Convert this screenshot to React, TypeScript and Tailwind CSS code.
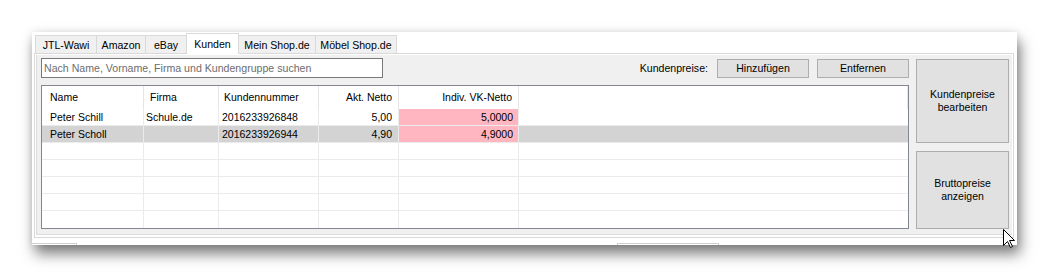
import React from 'react';

type Row = {
  name: string;
  firma: string;
  nr: string;
  netto: string;
  indiv: string;
  selected?: boolean;
};

const rows: Row[] = [
  { name: 'Peter Schill', firma: 'Schule.de', nr: '2016233926848', netto: '5,00', indiv: '5,0000' },
  { name: 'Peter Scholl', firma: '', nr: '2016233926944', netto: '4,90', indiv: '4,9000', selected: true },
];

const tabs = [
  { label: 'JTL-Wawi', w: 'w-[62px]' },
  { label: 'Amazon', w: 'w-[50px] -ml-px' },
  { label: 'eBay', w: 'w-[42px] -ml-px' },
  { label: 'Kunden', w: 'w-[53px] -ml-px', active: true },
  { label: 'Mein Shop.de', w: 'w-[78px] -ml-px' },
  { label: 'Möbel Shop.de', w: 'w-[82px] -ml-px' },
];

const App: React.FC = () => {
  return (
    <div className="relative w-[1051px] h-[278px] overflow-hidden bg-white pl-[32px] pt-[32px] font-['Liberation_Sans',Arial,sans-serif] text-black">
      {/* Fenster */}
      <div className="w-[985px] h-[213px] bg-white flex flex-col shadow-[3px_9px_13px_rgba(0,0,0,0.5),0_0_8px_rgba(0,0,0,0.1)]">
        {/* Reiter */}
        <div className="flex items-end h-[21px] pl-[3px] text-[10.6px] leading-none">
          {tabs.map((t) =>
            t.active ? (
              <div
                key={t.label}
                className={`${t.w} h-[21px] -mb-px relative z-[1] bg-white border-t border-x border-[#d9d9d9] flex items-start justify-center pt-[5px]`}
              >
                {t.label}
              </div>
            ) : (
              <div
                key={t.label}
                className={`${t.w} h-[18px] bg-[#f0f0f0] border-t border-x border-[#d9d9d9] flex items-center justify-center pt-px`}
              >
                {t.label}
              </div>
            )
          )}
        </div>

        {/* Registerkarte */}
        <div className="ml-[2px] w-[980px] h-[185px] border border-[#d9d9d9] bg-white pt-px pl-px pb-[2px] pr-px">
          <div className="h-full flex gap-[7px] bg-[#f0f0f0] border-l border-b border-[#dcdcdc] pl-[4px] pt-[3px]">
            {/* linke Spalte */}
            <div className="w-[868px] flex flex-col">
              <div className="h-[20px] flex items-end text-[10.6px] leading-none">
                <div className="w-[342px] h-[20px] border border-[#7a7a7a] bg-white flex items-center pl-[2px] text-[#6d6d6d]">
                  Nach Name, Vorname, Firma und Kundengruppe suchen
                </div>
                <div className="ml-auto flex items-end">
                  <span className="mr-[9px] mb-[4px]">Kundenpreise:</span>
                  <button className="w-[92px] h-[19px] bg-[#e1e1e1] border border-[#adadad] flex items-center justify-center">
                    Hinzufügen
                  </button>
                  <button className="ml-[8px] w-[92px] h-[19px] bg-[#e1e1e1] border border-[#adadad] flex items-center justify-center">
                    Entfernen
                  </button>
                </div>
              </div>

              {/* Tabelle */}
              <div className="mt-[7px] h-[144px] border border-[#828790] bg-white flex flex-col text-[10.5px] leading-none">
                <div className="flex h-[23px]">
                  <div className="w-[102px] border-r border-[#e5e5e5] flex items-center pl-[8px]">Name</div>
                  <div className="w-[75px] border-r border-[#e5e5e5] flex items-center pl-[6px]">Firma</div>
                  <div className="w-[100px] border-r border-[#e5e5e5] flex items-center pl-[5px]">Kundennummer</div>
                  <div className="w-[80px] border-r border-[#e5e5e5] flex items-center justify-end pr-[6px]">Akt. Netto</div>
                  <div className="w-[120px] border-r border-[#e5e5e5] flex items-center justify-end pr-[6px]">Indiv. VK-Netto</div>
                  <div className="flex-1 border-r border-[#e5e5e5]" />
                </div>
                {rows.map((r) => (
                  <div
                    key={r.nr}
                    className={`flex h-[17px] border-b border-[#ebebeb] ${r.selected ? 'bg-[#d3d3d3]' : 'bg-white'}`}
                  >
                    <div className="w-[102px] border-r border-[#ebebeb] flex items-center pl-[8px]">{r.name}</div>
                    <div className="w-[75px] border-r border-[#ebebeb] flex items-center pl-[2px]">{r.firma}</div>
                    <div className="w-[100px] border-r border-[#ebebeb] flex items-center pl-[3px]">{r.nr}</div>
                    <div className="w-[80px] border-r border-[#ebebeb] flex items-center justify-end pr-[6px]">{r.netto}</div>
                    <div className="w-[120px] border-r border-[#ebebeb] bg-[#ffb6c1] flex items-center justify-end pr-[5px]">{r.indiv}</div>
                    <div className="flex-1" />
                  </div>
                ))}
                {[0, 1, 2, 3, 4].map((i) => (
                  <div key={i} className={`flex h-[17px] ${i < 4 ? 'border-b border-[#ebebeb]' : ''}`}>
                    <div className="w-[102px] border-r border-[#ebebeb]" />
                    <div className="w-[75px] border-r border-[#ebebeb]" />
                    <div className="w-[100px] border-r border-[#ebebeb]" />
                    <div className="w-[80px] border-r border-[#ebebeb]" />
                    <div className="w-[120px] border-r border-[#ebebeb]" />
                    <div className="flex-1" />
                  </div>
                ))}
              </div>
            </div>

            {/* rechte Spalte */}
            <div className="w-[93px] pt-px flex flex-col gap-[8px] text-[10.5px] leading-[13px]">
              <button className="h-[84px] bg-[#e1e1e1] border border-[#adadad] flex items-center justify-center text-center">
                Kundenpreise
                <br />
                bearbeiten
              </button>
              <button className="h-[78px] bg-[#e1e1e1] border border-[#adadad] flex items-center justify-center text-center">
                Bruttopreise
                <br />
                anzeigen
              </button>
            </div>
          </div>
        </div>

        {/* untere Reiter, angeschnitten */}
        <div className="flex h-[7px] items-end">
          <div className="w-[45px] h-[2px] border-t border-r border-[#d0d0d0]" />
          <div className="ml-[540px] w-[102px] h-[2px] border-t border-x border-[#d0d0d0]" />
        </div>
      </div>

      {/* Mauszeiger */}
      <svg className="absolute left-[1003px] top-[229px]" width="13" height="20" viewBox="0 0 13 20">
        <path
          d="M0.5 0.5 V16.5 L4.5 12.5 L7.5 18.5 L9.5 17.5 L6.5 11.5 H11.5 Z"
          fill="#fff"
          stroke="#000"
          strokeWidth="1"
          strokeLinejoin="miter"
        />
      </svg>
    </div>
  );
};

export default App;
